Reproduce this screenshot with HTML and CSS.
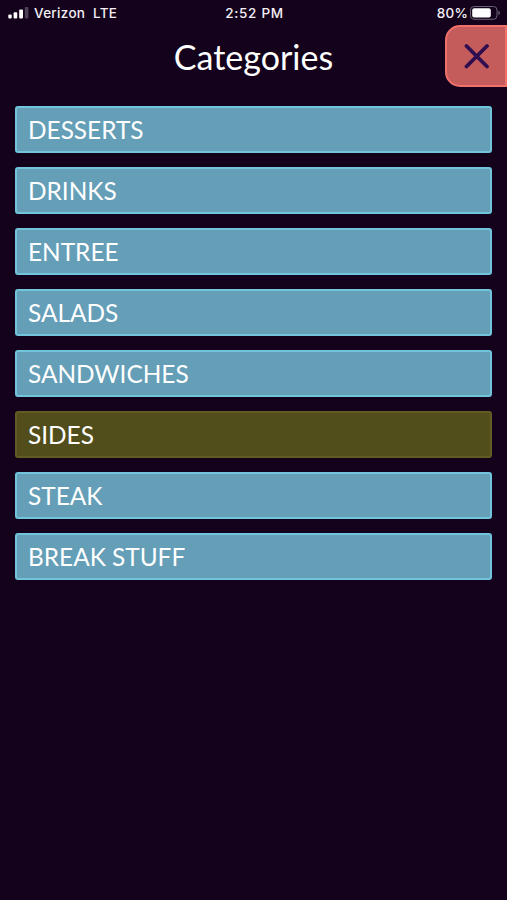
FILE: index.html
```html
<!DOCTYPE html>
<html lang="en">
<head>
    <meta charset="UTF-8">
    <meta name="viewport" content="width=device-width, initial-scale=1.0">
    <title>Categories</title>
    <link rel="stylesheet" href="styles.css">
</head>
<body>
    <div class="status-bar">
        <div class="carrier">
            <svg class="signal" width="21" height="12" viewBox="0 0 21 12" fill="#fff">
                <rect x="0.3" y="7.4" width="3.4" height="4" rx="1"/>
                <rect x="5.6" y="5.2" width="3.6" height="6.2" rx="1"/>
                <rect x="11.2" y="2.6" width="3.8" height="8.8" rx="1"/>
                <rect x="16.8" y="0" width="3.6" height="11.4" rx="1" opacity="0.25"/>
            </svg>
            <span>Verizon&nbsp; LTE</span>
        </div>
        <div class="clock">2:52 PM</div>
        <div class="power">
            <span>80%</span>
            <svg class="battery" width="31" height="14" viewBox="0 0 31 14">
                <rect x="0.5" y="0.5" width="26.5" height="12.8" rx="3.5" fill="none" stroke="#6a6174"/>
                <rect x="2.2" y="2.2" width="18.6" height="9.4" rx="2" fill="#fff"/>
                <path d="M28.3 4.8 Q30 5.3 30 6.9 Q30 8.5 28.3 9 Z" fill="#6a6174"/>
            </svg>
        </div>
    </div>
    <div class="header">
        <h1>Categories</h1>
        <button class="close-button" aria-label="Close">
            <svg width="26" height="26" viewBox="0 0 26 26">
                <path d="M3.5 3 L24 23.5 M24 3 L3.5 23.5" stroke="#2e0e50" stroke-width="3.8" stroke-linecap="round"/>
            </svg>
        </button>
    </div>
    <div class="category-list">
        <button class="category">DESSERTS</button>
        <button class="category">DRINKS</button>
        <button class="category">ENTREE</button>
        <button class="category">SALADS</button>
        <button class="category">SANDWICHES</button>
        <button class="category selected">SIDES</button>
        <button class="category">STEAK</button>
        <button class="category">BREAK STUFF</button>
    </div>
</body>
</html>
```
FILE: styles.css
```css
body {
    font-family: Lato, sans-serif;
    background-color: #14021c;
    color: #fff;
    margin: 0;
    height: 100vh;
    overflow: hidden;
}
.status-bar {
    display: grid;
    grid-template-columns: 1fr auto 1fr;
    align-items: center;
    height: 25px;
    padding: 1px 6px 0 8px;
    box-sizing: border-box;
    font-family: Inter, sans-serif;
    font-size: 13.5px;
    font-weight: 500;
    color: #f3eff5;
}
.carrier,
.power {
    display: flex;
    align-items: center;
}
.carrier {
    gap: 5px;
    letter-spacing: 0.3px;
}
.clock {
    letter-spacing: 0.7px;
}
.power {
    justify-content: flex-end;
    gap: 2px;
    letter-spacing: 0.2px;
}
.header {
    display: grid;
    grid-template-columns: 62px 1fr 62px;
    align-items: start;
    height: 61px;
}
h1 {
    grid-column: 2;
    margin: 0;
    font-size: 34px;
    font-weight: 400;
    line-height: 64px;
    text-align: center;
}
.close-button {
    display: flex;
    align-items: center;
    justify-content: center;
    height: 62px;
    padding: 0;
    background-color: #c45c5b;
    border: 2px solid #f0706a;
    border-radius: 15px 0 0 15px;
}
.category-list {
    display: flex;
    flex-direction: column;
    gap: 14px;
    padding: 20px 15px 0;
}
.category {
    height: 47px;
    padding: 0 11px;
    font-family: inherit;
    font-size: 24.4px;
    color: #fff;
    text-align: left;
    background-color: #649eb7;
    border: 2px solid #72c3dc;
    border-radius: 3px;
}
.selected {
    background-color: #524e1b;
    border-color: #625c24;
}
```
